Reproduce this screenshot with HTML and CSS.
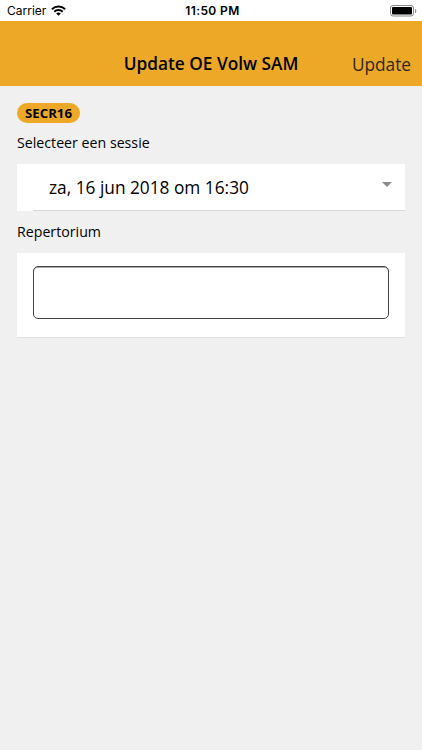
FILE: index.html
```html
<!DOCTYPE html>
<html lang="nl">
<head>
<meta charset="utf-8">
<title>Update OE Volw SAM</title>
<link rel="stylesheet" href="styles.css">
</head>
<body>
<div class="status">
  <div class="carrier"><span>Carrier</span>
    <svg width="15" height="11" viewBox="0 0 15 11" fill="none" stroke="#000" stroke-width="2"><path d="M.9 4.200a9.500 9.500 0 0 1 13.200 0M3.300 6.700a6 6 0 0 1 8.400 0"/><path d="M7.500 10.800 5.200 8.500a3.300 3.300 0 0 1 4.600 0z" fill="#000" stroke="none"/></svg>
  </div>
  <div class="time">11:50 PM</div>
  <div class="battery"><svg width="27" height="12" viewBox="0 0 27 12"><rect x=".5" y=".5" width="23" height="10.500" rx="2.500" fill="none" stroke="#888"/><rect x="2" y="2" width="20" height="7.500" rx="1"/><path d="M25 4c1.800.5 1.800 3.500 0 4z" fill="#888"/></svg></div>
</div>
<header class="bar"><h1>Update OE Volw SAM</h1><button class="action">Update</button></header>
<main>
  <span class="badge">SECR16</span>
  <p class="label">Selecteer een sessie</p>
  <div class="card select"><div class="field"><span>za, 16 jun 2018 om 16:30</span><svg class="caret" width="10" height="5" viewBox="0 0 10 5"><path d="M0 0h10L5 5z" fill="#8c8c8c"/></svg></div></div>
  <p class="label second">Repertorium</p>
  <div class="card"><textarea class="input"></textarea></div>
</main>
</body>
</html>
```
FILE: styles.css
```css
* { box-sizing: border-box; }
body { margin: 0; min-height: 750px; background: #f0f0f0; color: #000; font-family: "Open Sans", sans-serif; }
.status { height: 21px; background: #fff; display: grid; grid-template-columns: 1fr auto 1fr; align-items: center; padding: 0 5px 0 7px; font: 12px/21px Inter, sans-serif; }
.carrier { display: flex; align-items: center; gap: 5px; }
.time { font-weight: 600; letter-spacing: .4px; padding-left: 1px; }
.battery { display: flex; justify-content: flex-end; }
.bar { height: 65px; background: #eda828; display: grid; grid-template-columns: 1fr auto 1fr; align-items: end; padding: 0 11px 9px; }
h1 { grid-column: 2; margin: 0; font-size: 17.250px; line-height: 26px; font-weight: 600; }
.action { justify-self: end; padding: 0; border: 0; background: none; font: 17.250px/24px "Open Sans", sans-serif; color: #302820; }
main { padding: 17px 17px 0; }
.badge { display: block; width: 63px; height: 20px; border-radius: 10px; background: #eda828; font-size: 13.200px; line-height: 20px; font-weight: 700; text-align: center; }
.label { margin: 10px 0 11px; font-size: 14.200px; line-height: 20px; }
.second { margin: 11px 0; }
.card { background: #fff; border-bottom: 1px solid #e0e0e4; padding: 13px 16px 18px; height: 85px; }
.select { height: 47px; border: 0; padding: 0 0 0 16px; }
.field { height: 47px; display: flex; align-items: center; justify-content: space-between; padding: 0 13px 0 16px; border-bottom: 1px solid #d8d8dc; font-size: 17.300px; }
.caret { margin-bottom: 5px; }
.input { display: block; width: 100%; height: 53px; border: 1px solid #444; border-radius: 5px; resize: none; background: #fff; box-shadow: inset 0 1px 0 #aaa; }
```
